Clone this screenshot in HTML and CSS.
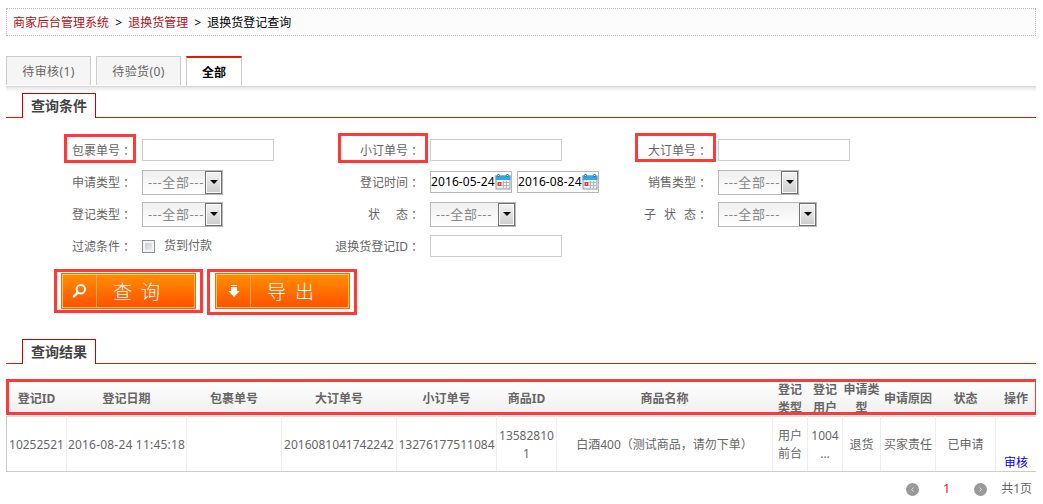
FILE: index.html
```html
<!DOCTYPE html>
<html lang="zh-CN">
<head>
    <meta charset="UTF-8">
    <title>退换货登记查询</title>
    <link rel="stylesheet" href="styles.css">
</head>
<body>
    <svg width="0" height="0" class="defs">
        <symbol id="calendar" viewBox="0 0 16 16">
            <rect x="1" y="2" width="14" height="13" fill="#eef1f3" stroke="#8d9aa3" stroke-width="1"/>
            <rect x="0.5" y="1.5" width="15" height="4.5" fill="#35a7e0"/>
            <path d="M3.5 0v3M12.5 0v3" stroke="#2a78ad" stroke-width="2"/>
            <path d="M3.5 1v1M12.5 1v1" stroke="#fff" stroke-width="1"/>
            <path d="M7 8.5h7M7 11.5h7M8.5 7v7M11.5 7v7" stroke="#aeb8be" stroke-width="1"/>
            <rect x="2.5" y="8" width="4" height="4" fill="#e04433"/>
            <rect x="4" y="9.5" width="1" height="1" fill="#fff"/>
        </symbol>
    </svg>

    <div class="crumbs">
        <a href="#">商家后台管理系统</a> <i>&gt;</i> <a href="#">退换货管理</a> <i>&gt;</i> <span>退换货登记查询</span>
    </div>

    <div class="tabs">
        <a class="tab" href="#">待审核(1)</a>
        <a class="tab" href="#">待验货(0)</a>
        <a class="tab active" href="#">全部</a>
    </div>
    <div class="tab-shadow"></div>

    <div class="section"><h2>查询条件</h2></div>

    <form class="search">
        <div class="field">
            <label>包裹单号<b lang="zh-TW">：</b></label>
            <input type="text" class="text">
            <span class="mark mark-package"></span>
        </div>
        <div class="field">
            <label>小订单号<b lang="zh-TW">：</b></label>
            <input type="text" class="text">
            <span class="mark mark-small"></span>
        </div>
        <div class="field">
            <label>大订单号<b lang="zh-TW">：</b></label>
            <input type="text" class="text">
            <span class="mark mark-big"></span>
        </div>

        <div class="field">
            <label>申请类型<b lang="zh-TW">：</b></label>
            <div class="select"><span>---全部---</span><em></em></div>
        </div>
        <div class="field">
            <label>登记时间<b lang="zh-TW">：</b></label>
            <div class="date"><span>2016-05-24</span><svg width="16" height="16"><use href="#calendar"/></svg></div>
            <div class="date"><span>2016-08-24</span><svg width="16" height="16"><use href="#calendar"/></svg></div>
        </div>
        <div class="field">
            <label>销售类型<b lang="zh-TW">：</b></label>
            <div class="select"><span>---全部---</span><em></em></div>
        </div>

        <div class="field">
            <label>登记类型<b lang="zh-TW">：</b></label>
            <div class="select"><span>---全部---</span><em></em></div>
        </div>
        <div class="field">
            <label><span class="two">状</span>态<b lang="zh-TW">：</b></label>
            <div class="select select-status"><span>---全部---</span><em></em></div>
        </div>
        <div class="field">
            <label><span class="three">子状</span>态<b lang="zh-TW">：</b></label>
            <div class="select select-sub"><span>---全部---</span><em></em></div>
        </div>

        <div class="field">
            <label>过滤条件<b lang="zh-TW">：</b></label>
            <span class="checkbox"></span><span>货到付款</span>
        </div>
        <div class="field">
            <label>退换货登记ID<b lang="zh-TW">：</b></label>
            <input type="text" class="text">
        </div>
    </form>

    <div class="buttons">
        <div class="btn">
            <span class="btn-icon">
                <svg width="16" height="16" viewBox="0 0 16 16">
                    <circle cx="9.8" cy="6.2" r="4.2" fill="none" stroke="#fff" stroke-width="2"/>
                    <path d="M6.7 9.6L2.9 13.4" stroke="#fff" stroke-width="2.4" stroke-linecap="round"/>
                </svg>
            </span>
            <span class="btn-text"><span>查</span><span>询</span></span>
            <span class="mark mark-query"></span>
        </div>
        <div class="btn">
            <span class="btn-icon">
                <svg width="16" height="16" viewBox="0 0 16 16">
                    <path d="M6 2h6v1H6zM6 4h6v4h2.500L9 14L3.500 8H6z" fill="#fff"/>
                </svg>
            </span>
            <span class="btn-text"><span>导</span><span>出</span></span>
            <span class="mark mark-export"></span>
        </div>
    </div>

    <div class="section section-result"><h2>查询结果</h2></div>

    <div class="result">
        <table>
            <colgroup>
                <col class="w60"><col class="w120"><col class="w95"><col class="w115"><col class="w100"><col class="w60"><col class="w216">
                <col class="w35"><col class="w35"><col class="w38"><col class="w55"><col class="w60"><col class="w41">
            </colgroup>
            <thead>
                <tr>
                    <th>登记ID</th>
                    <th>登记日期</th>
                    <th>包裹单号</th>
                    <th>大订单号</th>
                    <th>小订单号</th>
                    <th>商品ID</th>
                    <th>商品名称</th>
                    <th>登记<br>类型</th>
                    <th>登记<br>用户</th>
                    <th>申请类<br>型</th>
                    <th>申请原因</th>
                    <th>状态</th>
                    <th>操作</th>
                </tr>
            </thead>
            <tbody>
                <tr>
                    <td>10252521</td>
                    <td class="time">2016-08-24 11:45:18</td>
                    <td></td>
                    <td>2016081041742242</td>
                    <td>13276177511084</td>
                    <td>13582810<br>1</td>
                    <td>白酒400（测试商品，请勿下单）</td>
                    <td>用户<br>前台</td>
                    <td>1004<br>...</td>
                    <td>退货</td>
                    <td>买家责任</td>
                    <td>已申请</td>
                    <td class="action"><a href="#">审核</a></td>
                </tr>
            </tbody>
        </table>
        <span class="mark mark-head"></span>
    </div>

    <div class="pager">
        <svg width="13" height="13" viewBox="0 0 13 13">
            <circle cx="6.5" cy="6.5" r="6.5" fill="#999"/>
            <path d="M7.500 4.500L5.500 6.500L7.500 8.500" fill="none" stroke="#ddd" stroke-width="1"/>
        </svg>
        <span class="current">1</span>
        <svg width="13" height="13" viewBox="0 0 13 13">
            <circle cx="6.5" cy="6.5" r="6.5" fill="#999"/>
            <path d="M5.500 4.500L7.500 6.500L5.500 8.500" fill="none" stroke="#ddd" stroke-width="1"/>
        </svg>
        <span class="total">共1页</span>
    </div>
</body>
</html>
```

FILE: styles.css
```css
* {
    box-sizing: border-box;
}

body {
    width: 1030px;
    margin: 0 0 0 6px;
    padding-top: 8px;
    background: #fff;
    color: #666;
    font: 12px/18px "Noto Sans", "Noto Sans CJK SC", sans-serif;
}

a {
    text-decoration: none;
}

.defs {
    position: absolute;
}

.crumbs {
    height: 28px;
    padding-left: 6px;
    border: 1px dotted #bbb;
    background: #fcfcfc;
    color: #000;
    line-height: 27px;
}

.crumbs a {
    color: #a8141b;
}

.crumbs i {
    margin: 0 3px;
    font-style: normal;
}

/* tabs */
.tabs {
    display: flex;
    gap: 5px;
    height: 30px;
    margin-top: 20px;
}

.tab {
    width: 85px;
    height: 29px;
    border: 1px solid #ccc;
    border-bottom: 0;
    background: #f5f5f5;
    color: #666;
    line-height: 29px;
    letter-spacing: 0.4px;
    text-align: center;
}

.tab.active {
    width: 56px;
    height: 30px;
    border-top: 2px solid #d91e06;
    background: #fff;
    color: #000;
    font-weight: bold;
    letter-spacing: 0;
}

.tab-shadow {
    height: 7px;
    border-top: 1px solid #d8d8d8;
    background: linear-gradient(#e6e6e6, #fff 5px);
}

/* section titles */
.section {
    height: 25px;
    border-bottom: 1px solid #d91e06;
}

.section h2 {
    width: 74px;
    height: 25px;
    margin: 0 0 0 16px;
    border: 1px solid #c00;
    border-bottom: 0;
    background: #fff;
    color: #444;
    font-size: 14px;
    line-height: 24px;
    text-align: center;
}

/* search form */
.search {
    display: grid;
    grid-template-columns: repeat(3, 288px);
    grid-auto-rows: 32px;
    padding-top: 16px;
}

.field {
    position: relative;
    display: flex;
    align-items: center;
}

.field label {
    flex: none;
    width: 126px;
    margin-right: 10px;
    padding-top: 1px;
    text-align: right;
    white-space: nowrap;
}

.field label b {
    display: inline-block;
    width: 12px;
    font-family: "Noto Sans CJK TC", sans-serif;
    font-weight: normal;
    line-height: 1;
    text-indent: -1px;
    vertical-align: -1px;
}

.two {
    letter-spacing: 16px;
}

.three {
    letter-spacing: 8px;
}

.text {
    width: 132px;
    height: 22px;
    padding: 0 2px;
    border: 1px solid #ccc;
}

.select {
    display: flex;
    width: 81px;
    height: 25px;
    border: 1px solid #b8b8b8;
    background: linear-gradient(#efefef, #fff);
    color: #888;
}

.select span {
    flex: 1;
    padding-left: 5px;
    font-size: 13px;
    line-height: 23px;
    letter-spacing: 0.6px;
    white-space: nowrap;
}

.select em {
    display: flex;
    align-items: center;
    justify-content: center;
    width: 17px;
    border: 1px solid #707070;
    background: linear-gradient(#f4f4f4, #ccc);
    box-shadow: inset 0 0 0 1px #fafafa;
}

.select em::after {
    content: "";
    border: 4px solid transparent;
    border-top-color: #000;
    border-bottom: 0;
}

.select-status {
    width: 86px;
}

.select-sub {
    width: 99px;
}

.date {
    display: flex;
    flex: none;
    align-items: center;
    width: 82px;
    height: 22px;
    margin-right: 5px;
    border: 1px solid #b8b8b8;
    color: #000;
}

.date span {
    width: 64px;
    letter-spacing: 0.1px;
    white-space: nowrap;
}

.checkbox {
    width: 13px;
    height: 13px;
    margin-right: 9px;
    border: 1px solid #8e8f8f;
    background: linear-gradient(135deg, #bfc5cc, #f6f6f6);
    box-shadow: inset 0 0 0 2px #f4f4f4;
}

/* red frames */
.mark {
    position: absolute;
    border: 3px solid #ff3838;
}

.mark-package {
    left: 58px;
    top: 0;
    width: 72px;
    height: 29px;
}

.mark-small {
    left: 44px;
    top: -1px;
    width: 90px;
    height: 30px;
}

.mark-big {
    left: 53px;
    top: -1px;
    width: 81px;
    height: 29px;
}

/* buttons */
.buttons {
    display: flex;
    gap: 19px;
    padding: 11px 0 0 55px;
}

.btn {
    position: relative;
    display: flex;
    width: 135px;
    height: 36px;
    padding: 1px;
    border: 1px solid #f60;
    background: linear-gradient(#ff9000, #ff5000);
    box-shadow: inset 0 0 0 1px #ffc368;
    color: #fff;
}

.btn-icon {
    display: flex;
    align-items: center;
    width: 34px;
    padding-left: 8px;
    border-right: 1px solid #ffa050;
}

.btn-text {
    display: flex;
    gap: 9px;
    padding-left: 16px;
    font-size: 19px;
    font-weight: 300;
    line-height: 35px;
}

.mark-query {
    left: -8px;
    top: -5px;
    width: 149px;
    height: 44px;
}

.mark-export {
    left: -9px;
    top: -5px;
    width: 150px;
    height: 46px;
}

/* result table */
.section-result {
    margin-top: 30px;
}

.result {
    position: relative;
    padding-top: 16px;
}

table {
    width: 1030px;
    table-layout: fixed;
    border-collapse: collapse;
}

.w35 { width: 35px; }
.w38 { width: 38px; }
.w41 { width: 41px; }
.w55 { width: 55px; }
.w60 { width: 60px; }
.w95 { width: 95px; }
.w100 { width: 100px; }
.w115 { width: 115px; }
.w120 { width: 120px; }
.w216 { width: 216px; }

th,
td {
    padding: 0;
    text-align: center;
    white-space: nowrap;
}

th {
    padding-top: 1px;
    line-height: 17.5px;
}

thead tr {
    height: 36px;
    background: linear-gradient(#fff, #eee);
}

tbody tr {
    height: 55px;
}

td {
    padding-top: 2px;
    border: 1px solid #eee;
    border-top-color: #ddd;
    border-bottom-color: #ccc;
}

td:first-child {
    border-left-color: #ccc;
}

.time {
    letter-spacing: 0.2px;
}

td.action {
    line-height: 16px;
    vertical-align: bottom;
}

.action a {
    color: #00f;
}

.mark-head {
    left: 0;
    top: 15px;
    width: 1032px;
    height: 36px;
}

.pager {
    display: flex;
    align-items: center;
    justify-content: flex-end;
    margin-top: 8px;
    padding-right: 4px;
}

.current {
    width: 55px;
    color: #f00;
    text-align: center;
}

.total {
    margin-left: 14px;
}
```
